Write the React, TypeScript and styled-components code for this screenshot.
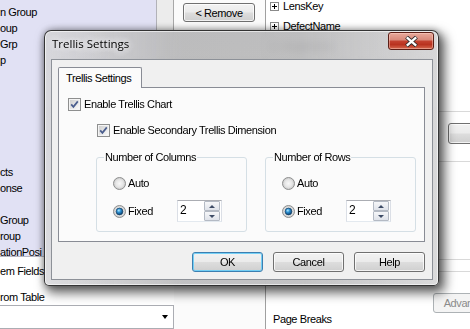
import React from "react";
import styled, { createGlobalStyle } from "styled-components";

const GlobalStyle = createGlobalStyle`
  html, body { margin: 0; padding: 0; background: #fff; }
  body {
    font-family: "Liberation Sans", Arial, sans-serif;
    font-size: 11px;
    letter-spacing: -0.4px;
    color: #000;
  }
  * { box-sizing: border-box; }
`;

const Screen = styled.div`
  position: relative;
  width: 470px;
  height: 329px;
  overflow: hidden;
  display: flex;
  background: #fff;
`;

/* ---------- background application ---------- */

const LeftPane = styled.div`
  width: 174px;
  flex: none;
  display: flex;
  flex-direction: column;
`;

const ListArea = styled.div`
  height: 257px;
  flex: none;
  display: flex;
  border-bottom: 1px solid #b7b7c4;
`;

const FieldList = styled.div`
  width: 157px;
  padding-top: 3px;
  background: #e1e1f4;
  border-right: 1px solid #b2b2b8;
`;

const FieldItem = styled.div`
  height: 16px;
  line-height: 18px;
  white-space: nowrap;
`;

const ScrollTrack = styled.div`
  flex: 1;
  background: #ececec;
  border-right: 1px solid #a8a8a8;
`;

const LowerList = styled.div`
  display: flex;
  flex-direction: column;
  gap: 10px;
  padding-top: 5px;
`;

const Combo = styled.div`
  margin: 1px 0 0 -2px;
  height: 24px;
  border: 1px solid #abadb3;
  background: #fff;
  display: flex;
  justify-content: flex-end;
`;

const ComboArrow = styled.span`
  width: 16px;
  display: flex;
  align-items: center;
  justify-content: center;
  &::after {
    content: "";
    border-left: 3px solid transparent;
    border-right: 3px solid transparent;
    border-top: 4px solid #000;
  }
`;

const MiddlePane = styled.div`
  width: 92px;
  flex: none;
  padding: 3px 0 0 9px;
  background: #fbfbfb;
  border-right: 1px solid #a0a0a0;
`;

const RightPane = styled.div`
  flex: 1;
  min-width: 0;
  display: flex;
  flex-direction: column;
  background: #fff;
  overflow: hidden;
`;

const Tree = styled.div`
  margin-top: -4px;
  height: 60px;
  flex: none;
`;

const TreeRow = styled.div`
  height: 20px;
  display: flex;
  align-items: center;
  gap: 4px;
  padding-left: 4px;
  white-space: nowrap;
`;

const Expander = styled.svg`
  flex: none;
  display: block;
`;

const PropBlock = styled.div<{ $top: number; $height: number }>`
  flex: none;
  margin-top: ${(p) => p.$top}px;
  height: ${(p) => p.$height}px;
  border-top: 1px solid #d9d9d9;
  border-bottom: 1px solid #d9d9d9;
  padding: 11px 0 0 182px;
  display: flex;
`;

const BottomArea = styled.div`
  margin-top: 21px;
  display: flex;
  flex-direction: column;
`;

const AdvancedRow = styled.div`
  padding-left: 167px;
  display: flex;
`;

const PageLabel = styled.div`
  padding-left: 7px;
  line-height: 12px;
  white-space: nowrap;
`;

/* ---------- shared controls ---------- */

const PushButton = styled.button<{ $w: number; $h?: number; $default?: boolean }>`
  flex: none;
  width: ${(p) => p.$w}px;
  height: ${(p) => p.$h ?? 20}px;
  padding: 0;
  font: inherit;
  letter-spacing: inherit;
  color: #000;
  white-space: nowrap;
  overflow: hidden;
  border-radius: 3px;
  border: 1px solid ${(p) => (p.$default ? "#3c7fb1" : "#707070")};
  background: linear-gradient(#f2f2f2 0%, #ebebeb 48%, #dddddd 52%, #cfcfcf 100%);
  box-shadow: inset 0 0 0 1px
    ${(p) => (p.$default ? "rgba(110, 205, 245, 0.95)" : "rgba(255, 255, 255, 0.75)")};
  &:disabled {
    color: #8b8b8b;
    border-color: #adb2b5;
    background: #f4f4f4;
    box-shadow: none;
  }
`;

/* ---------- dialog ---------- */

const Dialog = styled.div`
  position: absolute;
  left: 44px;
  top: 30px;
  width: 395px;
  height: 256px;
  display: flex;
  flex-direction: column;
  padding: 0 5px 5px 6px;
  border: 1px solid rgba(25, 25, 25, 0.85);
  border-radius: 7px 7px 5px 5px;
  background:
    linear-gradient(90deg, rgba(230, 230, 233, 0.5) 0%, rgba(150, 150, 150, 0.3) 35%,
      rgba(155, 155, 155, 0.3) 65%, rgba(225, 225, 225, 0.5) 100%),
    linear-gradient(rgba(196, 196, 198, 0.86), rgba(206, 206, 208, 0.88));
  backdrop-filter: blur(4px);
  box-shadow: inset 0 0 0 1px rgba(255, 255, 255, 0.6), 4px 5px 11px 2px rgba(0, 0, 0, 0.6),
    0 0 7px rgba(0, 0, 0, 0.3);
`;

const TitleBar = styled.div`
  height: 28px;
  flex: none;
  display: flex;
  align-items: flex-start;
  justify-content: space-between;
`;

const Caption = styled.span`
  margin: 6px 0 0 1px;
  font-family: "Open Sans", "Noto Sans", sans-serif;
  font-size: 11.5px;
  line-height: 14px;
  letter-spacing: 0;
  color: #000;
  text-shadow: 0 0 6px rgba(255, 255, 255, 0.95), 0 0 10px rgba(255, 255, 255, 0.8);
`;

const CloseButton = styled.div`
  width: 46px;
  height: 18px;
  margin: 1px -1px 0 0;
  border: 1px solid #5a1e16;
  border-radius: 3px;
  background: linear-gradient(#e8a99b 0%, #d98a7b 42%, #c3412f 52%, #b9321f 72%, #d5694f 100%);
  box-shadow: inset 0 0 0 1px rgba(255, 215, 205, 0.45);
  display: flex;
  align-items: center;
  justify-content: center;
`;

const Client = styled.div`
  flex: 1;
  display: flex;
  flex-direction: column;
  padding: 7px 7px 7px 6px;
  background: #f0f0f0;
  border: 1px solid rgba(60, 68, 80, 0.55);
`;

const TabStrip = styled.div`
  height: 20px;
  flex: none;
  display: flex;
`;

const Tab = styled.div`
  position: relative;
  z-index: 1;
  width: 84px;
  height: 21px;
  padding: 3px 0 0 7px;
  line-height: 14px;
  white-space: nowrap;
  background: #fbfbfb;
  border: 1px solid #898c95;
  border-bottom: none;
  border-radius: 2px 2px 0 0;
`;

const TabPanel = styled.div`
  height: 155px;
  flex: none;
  padding: 10px 0 0 9px;
  background: #fbfbfb;
  border: 1px solid #898c95;
  display: flex;
  flex-direction: column;
`;

const CheckRow = styled.label<{ $indent?: number; $gap?: number }>`
  display: flex;
  align-items: center;
  gap: 3px;
  height: 13px;
  line-height: 13px;
  margin: ${(p) => p.$gap ?? 0}px 0 0 ${(p) => p.$indent ?? 0}px;
  white-space: nowrap;
`;

const Glyph = styled.svg`
  display: block;
  flex: none;
`;

const GroupRow = styled.div`
  margin: 20px 0 0 28px;
  display: flex;
  gap: 18px;
`;

const GroupBox = styled.div`
  width: 151px;
  height: 75px;
  padding-left: 16px;
  border: 1px solid #d5dfe5;
  border-radius: 3px;
  display: flex;
  flex-direction: column;
`;

const Legend = styled.span`
  align-self: flex-start;
  margin: -7px 0 0 -9px;
  padding: 0 1px;
  line-height: 13px;
  background: #fbfbfb;
  white-space: nowrap;
`;

const OptionRow = styled.label<{ $gap: number; $height: number }>`
  display: flex;
  align-items: center;
  gap: 2px;
  height: ${(p) => p.$height}px;
  margin-top: ${(p) => p.$gap}px;
  white-space: nowrap;
`;

const OptionText = styled.span<{ $width?: number }>`
  width: ${(p) => (p.$width ? `${p.$width}px` : "auto")};
  line-height: 13px;
`;

const Spin = styled.div`
  width: 45px;
  height: 22px;
  display: flex;
  align-items: stretch;
  padding: 0 1px 0 2px;
  background: #fff;
  border: 1px solid #dbdfe6;
  border-top-color: #abadb3;
  border-bottom-color: #e3e9ef;
`;

const SpinValue = styled.span`
  flex: 1;
  line-height: 18px;
  font-size: 12px;
  letter-spacing: 0;
`;

const SpinButtons = styled.div`
  width: 16px;
  display: flex;
  flex-direction: column;
`;

const SpinButton = styled.div<{ $down?: boolean }>`
  flex: 1;
  display: flex;
  align-items: center;
  justify-content: center;
  border: 1px solid #b4bac4;
  border-radius: 1px;
  background: linear-gradient(#f6f7f9, #dfe3ea);
  &::after {
    content: "";
    border-left: 3px solid transparent;
    border-right: 3px solid transparent;
    ${(p) => (p.$down ? "border-top: 3px solid #3e4c66;" : "border-bottom: 3px solid #3e4c66;")}
  }
`;

const ButtonRow = styled.div`
  margin-top: 10px;
  display: flex;
  justify-content: flex-end;
  gap: 10px;
`;

/* ---------- drawn glyphs ---------- */

const CheckBox = () => (
  <Glyph width={13} height={13} viewBox="0 0 13 13">
    <defs>
      <linearGradient id="cbFill" x1="0" y1="0" x2="1" y2="1">
        <stop offset="0" stopColor="#cfcfcf" />
        <stop offset="1" stopColor="#fafafa" />
      </linearGradient>
    </defs>
    <rect x="0.5" y="0.5" width="12" height="12" fill="#f4f4f4" stroke="#8e8f8f" />
    <rect x="2" y="2" width="9" height="9" fill="url(#cbFill)" />
    <path d="M3.2 6.4 L5.4 8.9 L9.8 3.4" fill="none" stroke="#4b5e8e" strokeWidth="1.7" />
  </Glyph>
);

const RadioButton = ({ checked }: { checked?: boolean }) => (
  <Glyph width={13} height={13} viewBox="0 0 13 13">
    <defs>
      <radialGradient id="rbFill" cx="0.5" cy="0.5" r="0.5">
        <stop offset="0" stopColor="#f8f8f8" />
        <stop offset="0.6" stopColor="#e6e6e6" />
        <stop offset="1" stopColor="#c9c9c9" />
      </radialGradient>
      <radialGradient id="rbDot" cx="0.4" cy="0.35" r="0.6">
        <stop offset="0" stopColor="#b4ecff" />
        <stop offset="0.45" stopColor="#2e92d4" />
        <stop offset="1" stopColor="#0b4a7e" />
      </radialGradient>
    </defs>
    <circle cx="6.5" cy="6.5" r="6" fill="url(#rbFill)" stroke="#8e8f8f" />
    {checked && <circle cx="6.5" cy="6.5" r="3.4" fill="url(#rbDot)" stroke="#173f63" strokeWidth="0.7" />}
  </Glyph>
);

const PlusBox = () => (
  <Expander width={9} height={9} viewBox="0 0 9 9">
    <rect x="0.5" y="0.5" width="8" height="8" fill="#fff" stroke="#8a8a8a" />
    <path d="M2 4.5 H7 M4.5 2 V7" stroke="#000" strokeWidth="1" />
  </Expander>
);

const CloseGlyph = () => (
  <Glyph width={13} height={11} viewBox="0 0 13 11">
    <path d="M1.5 1 L11.5 10 M11.5 1 L1.5 10" stroke="#2d2a2a" strokeWidth="4" />
    <path d="M1.8 1.3 L11.2 9.7 M11.2 1.3 L1.8 9.7" stroke="#fff" strokeWidth="2.3" />
  </Glyph>
);

/* ---------- data ---------- */

const fields = [
  "n Group", "oup", "Grp", "p", "", "", "", "", "", "",
  "cts", "onse", "", "Group", "roup", "ationPosi",
];

const treeItems = ["LensKey", "DefectName", "AngleIndex"];

export default function App() {
  return (
    <>
      <GlobalStyle />
      <Screen>
        <LeftPane>
          <ListArea>
            <FieldList>
              {fields.map((f, i) => (
                <FieldItem key={i}>{f}</FieldItem>
              ))}
            </FieldList>
            <ScrollTrack />
          </ListArea>
          <LowerList>
            <FieldItem>em Fields</FieldItem>
            <FieldItem>rom Table</FieldItem>
          </LowerList>
          <Combo>
            <ComboArrow />
          </Combo>
        </LeftPane>

        <MiddlePane>
          <PushButton $w={72} $h={19}>&lt; Remove</PushButton>
        </MiddlePane>

        <RightPane>
          <Tree>
            {treeItems.map((t) => (
              <TreeRow key={t}>
                <PlusBox />
                {t}
              </TreeRow>
            ))}
          </Tree>
          <PropBlock $top={55} $height={51}>
            <PushButton $w={80} $h={21} />
          </PropBlock>
          <PropBlock $top={97} $height={13} />
          <BottomArea>
            <AdvancedRow>
              <PushButton $w={75} disabled>
                Advanced...
              </PushButton>
            </AdvancedRow>
            <PageLabel>Page Breaks</PageLabel>
          </BottomArea>
        </RightPane>

        <Dialog>
          <TitleBar>
            <Caption>Trellis Settings</Caption>
            <CloseButton>
              <CloseGlyph />
            </CloseButton>
          </TitleBar>
          <Client>
            <TabStrip>
              <Tab>Trellis Settings</Tab>
            </TabStrip>
            <TabPanel>
              <CheckRow>
                <CheckBox />
                Enable Trellis Chart
              </CheckRow>
              <CheckRow $indent={29} $gap={13}>
                <CheckBox />
                Enable Secondary Trellis Dimension
              </CheckRow>
              <GroupRow>
                {["Number of Columns", "Number of Rows"].map((title) => (
                  <GroupBox key={title}>
                    <Legend>{title}</Legend>
                    <OptionRow $gap={13} $height={13}>
                      <RadioButton />
                      <OptionText>Auto</OptionText>
                    </OptionRow>
                    <OptionRow $gap={10} $height={22}>
                      <RadioButton checked />
                      <OptionText $width={47}>Fixed</OptionText>
                      <Spin>
                        <SpinValue>2</SpinValue>
                        <SpinButtons>
                          <SpinButton />
                          <SpinButton $down />
                        </SpinButtons>
                      </Spin>
                    </OptionRow>
                  </GroupBox>
                ))}
              </GroupRow>
            </TabPanel>
            <ButtonRow>
              <PushButton $w={71} $default>OK</PushButton>
              <PushButton $w={71}>Cancel</PushButton>
              <PushButton $w={71}>Help</PushButton>
            </ButtonRow>
          </Client>
        </Dialog>
      </Screen>
    </>
  );
}
